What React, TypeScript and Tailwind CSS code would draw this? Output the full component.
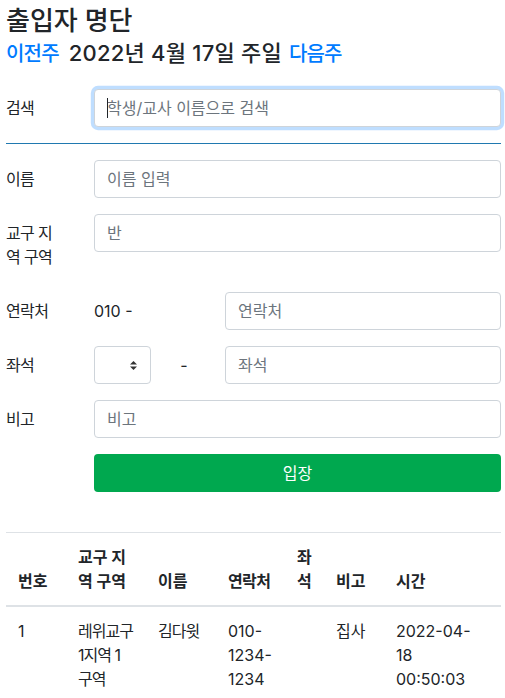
import React from "react";

const inputCls =
  "block w-full h-[38px] px-3 rounded-[4px] border border-[#ced4da] bg-white text-base text-[#495057] placeholder:text-[#6c757d] outline-none";

function SelectArrows() {
  return (
    <svg width="7" height="9" viewBox="0 0 7 9" className="text-[#333]">
      <path d="M0 3.6 L3.5 0 L7 3.6 Z" fill="currentColor" />
      <path d="M0 5.4 L3.5 9 L7 5.4 Z" fill="currentColor" />
    </svg>
  );
}

function FormRow({ label, children }: { label: string; children: React.ReactNode }) {
  return (
    <div className="grid grid-cols-[88px_1fr] mb-4">
      <label className="w-[57px] py-[7px] leading-6 tracking-[-0.04em]">{label}</label>
      <div>{children}</div>
    </div>
  );
}

export default function App() {
  return (
    <div className="min-h-screen bg-white text-[#212529] pl-[6px] pr-[4px] pt-[2px] font-[Inter,'Noto_Sans_CJK_KR',sans-serif] text-base leading-6">
      {/* Header */}
      <h2 className="text-[26px] leading-[38px] font-medium">출입자 명단</h2>
      <div className="mt-[1px] flex items-baseline leading-6 font-medium">
        <a href="#" className="text-[20px] text-[#007bff] tracking-[-0.04em]">이전주</a>
        <span className="ml-[10px] text-[22px] tracking-[0.01em]">2022년 4월 17일 주일</span>
        <a href="#" className="ml-[7px] text-[20px] text-[#007bff] tracking-[-0.04em]">다음주</a>
      </div>

      {/* Search */}
      <div className="grid grid-cols-[88px_1fr] mt-[23px]">
        <label className="py-[7px] leading-6 tracking-[-0.04em]">검색</label>
        <div className="relative">
          <input
            className={`${inputCls} border-[#80bdff] shadow-[0_0_0_0.2rem_rgba(0,123,255,0.25)] caret-transparent`}
            placeholder="학생/교사 이름으로 검색"
          />
          <span className="absolute left-[13px] top-[9px] w-px h-5 bg-[#212529]" />
        </div>
      </div>

      <hr className="my-4 border-0 border-t border-[#2079b0]" />

      {/* Entry form */}
      <FormRow label="이름">
        <input className={inputCls} placeholder="이름 입력" />
      </FormRow>
      <FormRow label="교구 지역 구역">
        <input className={inputCls} placeholder="반" />
      </FormRow>
      <FormRow label="연락처">
        <div className="grid grid-cols-[131px_1fr]">
          <span className="py-[7px]">010 -</span>
          <input className={inputCls} placeholder="연락처" />
        </div>
      </FormRow>
      <FormRow label="좌석">
        <div className="grid grid-cols-[131px_1fr]">
          <div className="flex items-center">
            <div className="w-[57px] h-[38px] rounded-[4px] border border-[#ced4da] flex items-center justify-end pr-[13px]">
              <SelectArrows />
            </div>
            <span className="flex-1 text-center pr-[8px]">-</span>
          </div>
          <input className={inputCls} placeholder="좌석" />
        </div>
      </FormRow>
      <FormRow label="비고">
        <input className={inputCls} placeholder="비고" />
      </FormRow>
      <div className="grid grid-cols-[88px_1fr]">
        <div />
        <button className="h-[38px] rounded-[4px] bg-[#00a84f] text-white">입장</button>
      </div>

      {/* Visitor table */}
      <table className="mt-10 w-full table-fixed border-collapse text-left">
        <colgroup>
          <col className="w-[60px]" />
          <col className="w-[80px]" />
          <col className="w-[70px]" />
          <col className="w-[69px]" />
          <col className="w-[39px]" />
          <col className="w-[60px]" />
          <col />
        </colgroup>
        <thead>
          <tr className="align-bottom font-bold">
            <th className="p-3 border-t border-b-2 border-[#dee2e6]">번호</th>
            <th className="p-3 border-t border-b-2 border-[#dee2e6]">교구 지역 구역</th>
            <th className="p-3 border-t border-b-2 border-[#dee2e6]">이름</th>
            <th className="p-3 border-t border-b-2 border-[#dee2e6] whitespace-nowrap tracking-[-0.04em]">연락처</th>
            <th className="p-3 border-t border-b-2 border-[#dee2e6]">좌석</th>
            <th className="p-3 border-t border-b-2 border-[#dee2e6]">비고</th>
            <th className="p-3 border-t border-b-2 border-[#dee2e6]">시간</th>
          </tr>
        </thead>
        <tbody>
          <tr className="align-top">
            <td className="p-3">1</td>
            <td className="p-3 break-keep tracking-[-0.06em]">레위교구 1지역 1 구역</td>
            <td className="p-3 break-keep tracking-[-0.06em]">김다윗</td>
            <td className="p-3">010-1234-1234</td>
            <td className="p-3"></td>
            <td className="p-3">집사</td>
            <td className="p-3">
              <div className="max-w-[80px]">2022-04-18 00:50:03</div>
            </td>
          </tr>
        </tbody>
      </table>
    </div>
  );
}
